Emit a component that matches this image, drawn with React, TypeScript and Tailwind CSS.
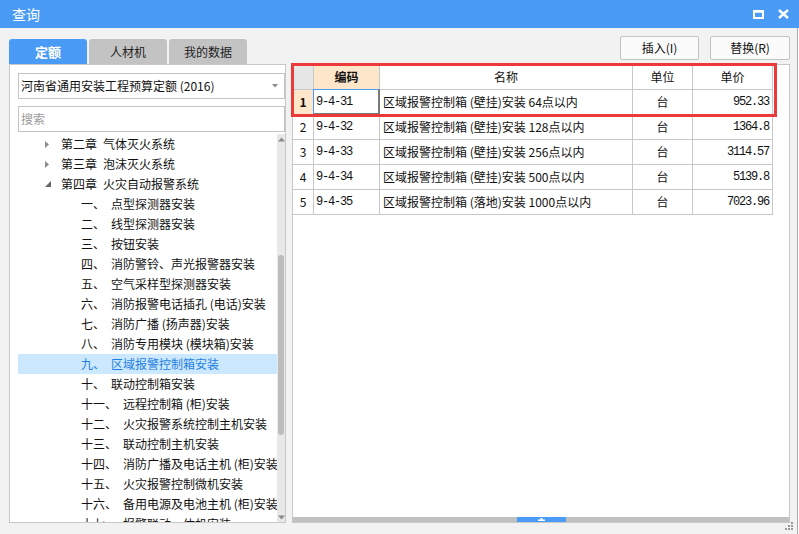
import React from "react";

const FONT = { fontFamily: '"Noto Sans CJK SC", "Noto Sans", sans-serif' };
const MONO = { fontFamily: '"Liberation Mono", "Noto Sans CJK SC", monospace' };

type TreeRow = { num?: string; text: string; chapter?: "open" | "closed" };

const tree: TreeRow[] = [
  { num: "第二章", text: "气体灭火系统", chapter: "closed" },
  { num: "第三章", text: "泡沫灭火系统", chapter: "closed" },
  { num: "第四章", text: "火灾自动报警系统", chapter: "open" },
  { num: "一、", text: "点型探测器安装" },
  { num: "二、", text: "线型探测器安装" },
  { num: "三、", text: "按钮安装" },
  { num: "四、", text: "消防警铃、声光报警器安装" },
  { num: "五、", text: "空气采样型探测器安装" },
  { num: "六、", text: "消防报警电话插孔 (电话)安装" },
  { num: "七、", text: "消防广播 (扬声器)安装" },
  { num: "八、", text: "消防专用模块 (模块箱)安装" },
  { num: "九、", text: "区域报警控制箱安装" },
  { num: "十、", text: "联动控制箱安装" },
  { num: "十一、", text: "远程控制箱 (柜)安装" },
  { num: "十二、", text: "火灾报警系统控制主机安装" },
  { num: "十三、", text: "联动控制主机安装" },
  { num: "十四、", text: "消防广播及电话主机 (柜)安装" },
  { num: "十五、", text: "火灾报警控制微机安装" },
  { num: "十六、", text: "备用电源及电池主机 (柜)安装" },
  { num: "十七、", text: "报警联动一体机安装" },
];

const rows = [
  { code: "9-4-31", name: "区域报警控制箱 (壁挂)安装 64点以内", unit: "台", price: "952.33" },
  { code: "9-4-32", name: "区域报警控制箱 (壁挂)安装 128点以内", unit: "台", price: "1364.8" },
  { code: "9-4-33", name: "区域报警控制箱 (壁挂)安装 256点以内", unit: "台", price: "3114.57" },
  { code: "9-4-34", name: "区域报警控制箱 (壁挂)安装 500点以内", unit: "台", price: "5139.8" },
  { code: "9-4-35", name: "区域报警控制箱 (落地)安装 1000点以内", unit: "台", price: "7023.96" },
];

const cell = "border-r border-b border-[#c8c8c8] h-[25px] flex items-center text-[12px] text-[#111]";

export default function App() {
  return (
    <div className="w-[799px] h-[534px] bg-white overflow-hidden" style={FONT}>
      <div className="w-[799px] h-[28px] bg-[#4a9bf6] flex items-center justify-between pl-[12px] pr-[10px]">
        <span className="text-white text-[14px] leading-none">查询</span>
        <div className="flex items-center gap-[14px]">
          <svg width="11" height="9" viewBox="0 0 11 9">
            <rect x="1" y="1.5" width="9" height="6.5" fill="none" stroke="#fff" strokeWidth="2" />
            <rect x="0" y="0" width="11" height="2.5" fill="#fff" />
          </svg>
          <svg width="11" height="10" viewBox="0 0 11 10">
            <path d="M1 1 L10 9 M10 1 L1 9" stroke="#fff" strokeWidth="2.4" />
          </svg>
        </div>
      </div>

      <div className="w-[798px] h-[506px] bg-[#f2f2f2] border-r border-[#a9a9a9] flex pl-[9px] gap-[6px] pb-[11px] relative">
        {/* left column */}
        <div className="w-[277px] flex flex-col pt-[11px]">
          <div className="h-[25px] flex gap-[2px]">
            <div className="w-[78px] rounded-t-[3px] bg-[#4a9bf6] text-white font-bold text-[13px] flex items-center justify-center">
              定额
            </div>
            <div className="w-[78px] rounded-t-[3px] bg-[#c3c3c3] text-[#222] text-[12px] flex items-center justify-center">
              人材机
            </div>
            <div className="w-[78px] rounded-t-[3px] bg-[#c3c3c3] text-[#222] text-[12px] flex items-center justify-center">
              我的数据
            </div>
          </div>
          <div className="flex-1 bg-white border border-[#c8c8c8] pl-[8px] pt-[8px] flex flex-col min-h-0">
            <div className="h-[26px] border border-[#c4c4c4] flex items-center justify-between pl-[2px] pr-[6px] text-[12px] text-[#111]">
              <span>河南省通用安装工程预算定额 (2016)</span>
              <svg width="6" height="4" viewBox="0 0 6 4">
                <path d="M0 0 L6 0 L3 3.5 Z" fill="#8a8a8a" />
              </svg>
            </div>
            <div className="h-[26px] mt-[7px] border border-[#c4c4c4] flex items-center pl-[2px] text-[12px] text-[#9a9a9a]">
              搜索
            </div>
            <div className="flex-1 mt-[2px] flex min-h-0 overflow-hidden">
              <div className="flex-1 min-w-0 flex flex-col overflow-hidden">
                {tree.map((r, i) => {
                  const active = i === 11;
                  return (
                    <div
                      key={i}
                      className={`h-[20px] shrink-0 flex items-center text-[12px] whitespace-nowrap overflow-hidden ${
                        active ? "bg-[#cce8ff] text-[#1f7fe0]" : "text-[#111]"
                      } ${r.chapter ? "pl-[27px]" : "pl-[63px]"}`}
                    >
                      {r.chapter === "closed" && (
                        <svg width="5" height="7" viewBox="0 0 5 7" className="mr-[11px] shrink-0">
                          <path d="M0 0 L4 3.5 L0 7 Z" fill="#8c8c8c" />
                        </svg>
                      )}
                      {r.chapter === "open" && (
                        <svg width="6" height="6" viewBox="0 0 6 6" className="mr-[10px] shrink-0">
                          <path d="M6 0 L6 6 L0 6 Z" fill="#666" />
                        </svg>
                      )}
                      <span className="shrink-0">{r.num}</span>
                      <span className="ml-[6px] shrink-0">{r.text}</span>
                    </div>
                  );
                })}
              </div>
              <div className="w-[8px] shrink-0 bg-[#e8e8e8] flex flex-col items-center">
                <svg width="7" height="5" viewBox="0 0 7 5" className="mt-[3px]">
                  <path d="M0 4.5 L3.5 0.5 L7 4.5 Z" fill="#8a8a8a" />
                </svg>
                <div className="w-[6px] h-[180px] mt-[113px] rounded-[3px] bg-[#bdbdbd]" />
                <div className="flex-1" />
                <svg width="7" height="5" viewBox="0 0 7 5" className="mb-[2px]">
                  <path d="M0 0.5 L7 0.5 L3.5 4.5 Z" fill="#8a8a8a" />
                </svg>
              </div>
            </div>
          </div>
        </div>

        {/* right column */}
        <div className="w-[498px] flex flex-col pt-[8px]">
          <div className="h-[24px] flex justify-end gap-[11px]">
            <button className="w-[79px] h-[24px] rounded-[2px] border border-[#c2c2c2] bg-[#fbfbfb] text-[12px] text-[#111]">
              插入(I)
            </button>
            <button className="w-[80px] h-[24px] rounded-[2px] border border-[#c2c2c2] bg-[#fbfbfb] text-[12px] text-[#111]">
              替换(R)
            </button>
          </div>
          <div className="flex-1 mt-[4px] bg-white border border-[#c8c8c8] relative flex flex-col">
            <div className="grid grid-cols-[21px_66px_253px_60px_80px] w-[480px]">
              <div className={`${cell} bg-[#e6e6e6]`} />
              <div className={`${cell} bg-[#fde6c9] justify-center font-bold`}>编码</div>
              <div className={`${cell} justify-center`}>名称</div>
              <div className={`${cell} justify-center`}>单位</div>
              <div className={`${cell} justify-center`}>单价</div>
              {rows.map((r, i) => (
                <React.Fragment key={r.code}>
                  <div className={`${cell} justify-center ${i === 0 ? "bg-[#fde6c9] font-bold" : ""}`}>{i + 1}</div>
                  <div className={`${cell} pl-[2px] relative`}>
                    <span className="text-[12px] tracking-[-1.2px]" style={MONO}>
                      {r.code}
                    </span>
                    {i === 0 && (
                      <div className="absolute top-[-1px] left-[-1px] right-[-1px] bottom-[-1px] border-t border-l border-[#4a9bf6] border-r-2 border-b-2 border-r-[#7a7a7a] border-b-[#7a7a7a]" />
                    )}
                  </div>
                  <div className={`${cell} pl-[3px] whitespace-nowrap`}>{r.name}</div>
                  <div className={`${cell} justify-center`}>{r.unit}</div>
                  <div className={`${cell} justify-end pr-[3px]`}>
                    <span className="text-[12px] tracking-[-1.2px]" style={MONO}>
                      {r.price}
                    </span>
                  </div>
                </React.Fragment>
              ))}
            </div>
            <div className="flex-1" />
            <div className="h-[5px] bg-[#c0c0c0] flex justify-center">
              <div className="w-[49px] h-[5px] bg-[#4a9bf6] flex items-end justify-center">
                <svg width="7" height="4" viewBox="0 0 7 4">
                  <path d="M2.5 0 H4.5 V1.5 H7 V3 H0 V1.5 H2.5 Z" fill="#fff" />
                </svg>
              </div>
            </div>
            {/* red highlight annotation */}
            <div className="absolute left-[-2px] top-[-2px] w-[486px] h-[54px] border-[3px] border-[#ec3a3a] pointer-events-none" />
          </div>
        </div>

        {/* resize grip */}
        <svg width="9" height="9" viewBox="0 0 9 9" className="absolute right-[3px] bottom-[3px]">
          <rect x="6" y="0" width="2" height="2" fill="#9a9a9a" />
          <rect x="3" y="3" width="2" height="2" fill="#9a9a9a" />
          <rect x="6" y="3" width="2" height="2" fill="#9a9a9a" />
          <rect x="0" y="6" width="2" height="2" fill="#9a9a9a" />
          <rect x="3" y="6" width="2" height="2" fill="#9a9a9a" />
          <rect x="6" y="6" width="2" height="2" fill="#9a9a9a" />
        </svg>
      </div>
    </div>
  );
}
